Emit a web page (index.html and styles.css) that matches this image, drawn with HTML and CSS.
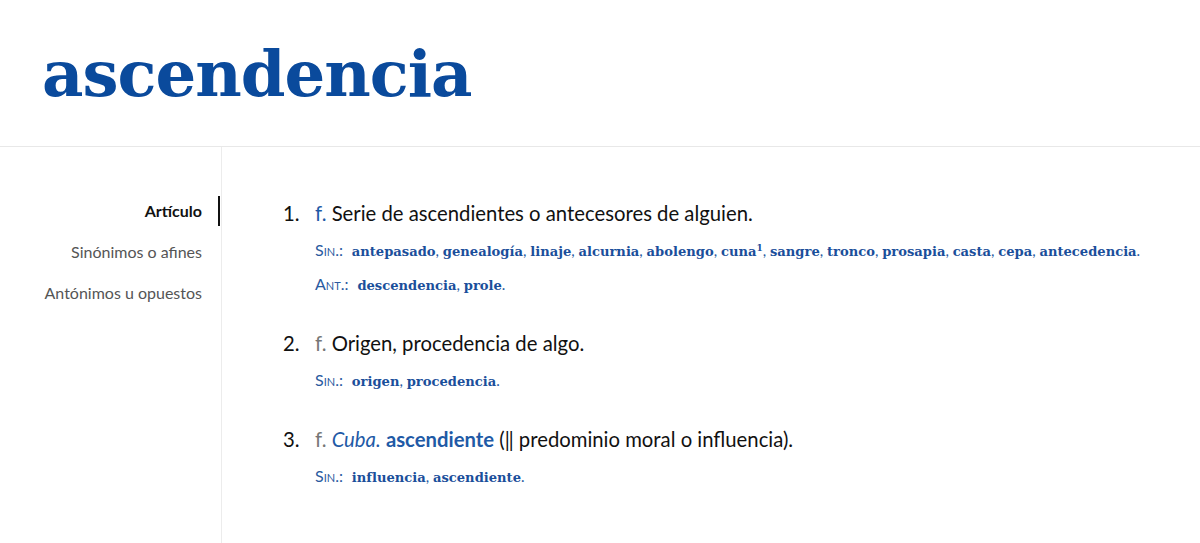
FILE: index.html
```html
<!DOCTYPE html>
<html lang="es">
<head>
<meta charset="utf-8">
<title>ascendencia</title>
<link rel="stylesheet" href="styles.css">
</head>
<body>
<header class="head">
  <h1 class="title">ascendencia</h1>
</header>
<div class="layout">
  <nav class="side">
    <a class="side-item active">Artículo</a>
    <a class="side-item">Sinónimos o afines</a>
    <a class="side-item">Antónimos u opuestos</a>
  </nav>
  <main class="content">
    <ol class="senses">
      <li class="sense">
        <div class="def"><span class="num">1.</span><span class="abbr blue">f.</span> Serie de ascendientes o antecesores de alguien.</div>
        <div class="rel"><span class="lab">S<span class="sc">IN</span>.:</span> <a>antepasado</a>, <a>genealogía</a>, <a>linaje</a>, <a>alcurnia</a>, <a>abolengo</a>, <a>cuna<sup>1</sup></a>, <a>sangre</a>, <a>tronco</a>, <a>prosapia</a>, <a>casta</a>, <a>cepa</a>, <a>antecedencia</a>.</div>
        <div class="rel"><span class="lab">A<span class="sc">NT</span>.:</span> <a>descendencia</a>, <a>prole</a>.</div>
      </li>
      <li class="sense">
        <div class="def"><span class="num">2.</span><span class="abbr">f.</span> Origen, procedencia de algo.</div>
        <div class="rel"><span class="lab">S<span class="sc">IN</span>.:</span> <a>origen</a>, <a>procedencia</a>.</div>
      </li>
      <li class="sense">
        <div class="def"><span class="num">3.</span><span class="abbr">f.</span> <i class="abbr-i">Cuba.</i> <b class="xref">ascendiente</b> (‖ predominio moral o influencia).</div>
        <div class="rel"><span class="lab">S<span class="sc">IN</span>.:</span> <a>influencia</a>, <a>ascendiente</a>.</div>
      </li>
    </ol>
  </main>
</div>
</body>
</html>
```

FILE: styles.css
```css
* { box-sizing: border-box; }
html, body { margin: 0; padding: 0; background: #fff; }
body {
  font-family: Lato, "Noto Sans", sans-serif;
  color: #1a1a1a;
  height: 543px;
  overflow: hidden;
}
.head {
  height: 147px;
  border-bottom: 1px solid #e8e8e8;
  padding-left: 42px;
  padding-top: 34px;
}
.title {
  margin: 0;
  font-family: "DejaVu Serif", serif;
  font-weight: bold;
  font-size: 64px;
  line-height: 80px;
  color: #0a4a9c;
  letter-spacing: -1px;
}
.layout {
  display: grid;
  grid-template-columns: 222px 1fr;
  height: 396px;
}
.side {
  border-right: 1px solid #ececec;
  display: flex;
  flex-direction: column;
  align-items: flex-end;
  padding-top: 53px;
  gap: 19px;
}
.side-item {
  font-size: 16px;
  line-height: 22px;
  color: #555;
  padding-right: 19px;
}
.side-item.active {
  color: #111;
  font-weight: bold;
  position: relative;
}
.side-item.active::after {
  content: "";
  position: absolute;
  right: 1px;
  top: -4px;
  width: 2px;
  height: 30px;
  background: #111;
}
.content { padding-left: 61px; padding-top: 53px; }
.senses { list-style: none; margin: 0; padding: 0; }
.sense { margin-bottom: 35px; }
.def {
  font-size: 20.3px;
  line-height: 26px;
  height: 26px;
  color: #111;
  margin-bottom: 13px;
}
.num { display: inline-block; width: 32px; }
.abbr { color: #777; }
.abbr.blue { color: #1f5aa6; }
.abbr-i { color: #1f5aa6; }
.xref { color: #1f5aa6; font-weight: bold; }
.rel {
  padding-left: 32px;
  font-size: 15px;
  line-height: 22px;
  height: 22px;
  color: #2a5aa0;
  margin-bottom: 12px;
  white-space: nowrap;
}
.lab { color: #2a5aa0; margin-right: 5px; font-size: 16px; }
.sc { font-size: 11px; }
.rel a {
  font-family: "DejaVu Serif", serif;
  font-weight: bold;
  font-size: 13.1px;
  color: #1b4f9b;
}
.rel sup { font-size: 9px; line-height: 0; }
```
